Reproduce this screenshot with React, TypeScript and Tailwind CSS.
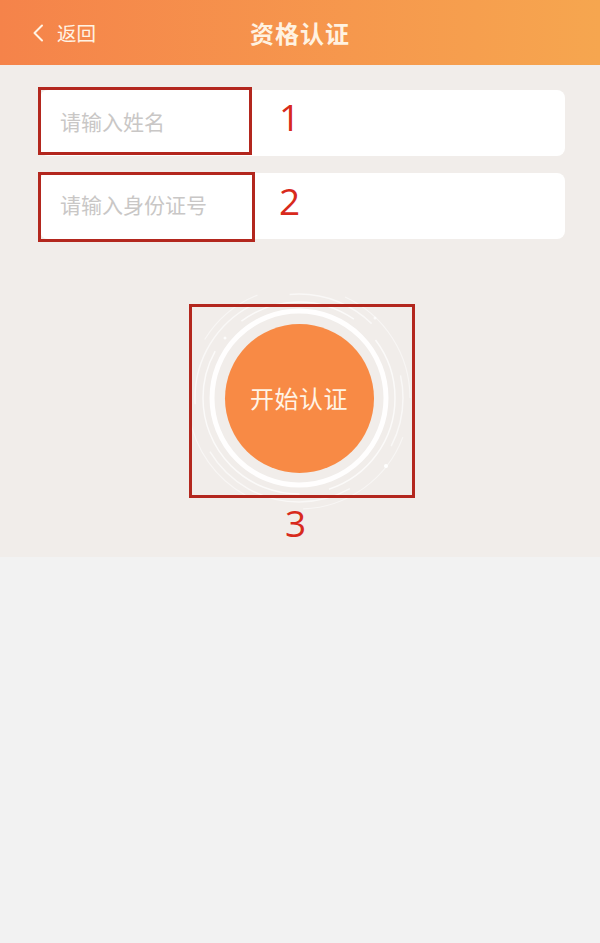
import React from "react";

const cjk = { fontFamily: '"Noto Sans CJK SC", "Noto Sans", sans-serif' };
const num = { fontFamily: '"Open Sans", "Liberation Sans", sans-serif' };

function Rings() {
  return (
    <svg width="240" height="240" viewBox="0 0 240 240" className="absolute inset-0">
      <circle cx="120" cy="120" r="87" fill="none" stroke="#ffffff" strokeWidth="5" opacity="0.95" />
      <circle cx="120" cy="120" r="96" fill="none" stroke="#ffffff" strokeWidth="1.5" opacity="0.7" strokeDasharray="120 30 200 40" />
      <circle cx="120" cy="120" r="104" fill="none" stroke="#ffffff" strokeWidth="1.5" opacity="0.6" strokeDasharray="90 60 160 50 120 40" strokeDashoffset="40" />
      <circle cx="120" cy="120" r="111" fill="none" stroke="#ffffff" strokeWidth="1.2" opacity="0.5" strokeDasharray="70 90 130 60 100 80" strokeDashoffset="120" />
      <circle cx="207" cy="188" r="2" fill="#ffffff" />
      <circle cx="46" cy="60" r="1.5" fill="#ffffff" opacity="0.8" />
      <circle cx="196" cy="40" r="1.5" fill="#ffffff" opacity="0.7" />
    </svg>
  );
}

export default function App() {
  return (
    <div className="w-[600px] h-[943px] bg-[#f2f2f2]" style={cjk}>
      <header className="h-[65px] bg-gradient-to-r from-[#f5834a] to-[#f6a64f] relative flex items-center justify-center">
        <div className="absolute left-[32px] top-0 h-[65px] flex items-center gap-[13px]">
          <svg width="12" height="18" viewBox="0 0 12 18">
            <polyline points="10,1.5 2.5,9 10,16.5" fill="none" stroke="#fff3e4" strokeWidth="2" strokeLinecap="round" strokeLinejoin="round" />
          </svg>
          <span className="text-[19.5px] text-[#fff3e4] leading-none">返回</span>
        </div>
        <h1 className="text-[24px] font-bold text-[#fff2e1] leading-none tracking-[1px]">资格认证</h1>
      </header>

      <main className="relative bg-[#f1edea] pt-[25px] h-[492px]">
        <div className="flex flex-col gap-[17px] pl-[40px] pr-[35px]">
          <div className="h-[66px] bg-white rounded-[8px] flex items-center pl-[20px] pb-[3px]">
            <span className="text-[21px] text-[#c9c7c6]">请输入姓名</span>
          </div>
          <div className="h-[66px] bg-white rounded-[8px] flex items-center pl-[20px] pb-[3px]">
            <span className="text-[21px] text-[#c9c7c6]">请输入身份证号</span>
          </div>
        </div>

        <div className="flex justify-center mt-[39px]">
          <div className="relative w-[240px] h-[240px] flex items-center justify-center ml-[-2px]">
            <Rings />
            <button className="relative w-[149px] h-[149px] rounded-full bg-[#f88a45] flex items-center justify-center">
              <span className="text-[24px] text-[#fff4e6] tracking-[0.5px]">开始认证</span>
            </button>
          </div>
        </div>

        {/* annotations */}
        <div className="absolute left-[38px] top-[22px] w-[214px] h-[68px] border-[3px] border-[#b3271e]" />
        <div className="absolute left-[38px] top-[107px] w-[217px] h-[70px] border-[3px] border-[#b3271e]" />
        <div className="absolute left-[189px] top-[239px] w-[226px] h-[194px] border-[3px] border-[#b3271e]" />
        <span className="absolute left-[279px] top-[33px] text-[37px] leading-none text-[#d82a1c]" style={num}>1</span>
        <span className="absolute left-[279px] top-[117px] text-[37px] leading-none text-[#d82a1c]" style={num}>2</span>
        <span className="absolute left-[285px] top-[439px] text-[37px] leading-none text-[#d82a1c]" style={num}>3</span>
      </main>
    </div>
  );
}
